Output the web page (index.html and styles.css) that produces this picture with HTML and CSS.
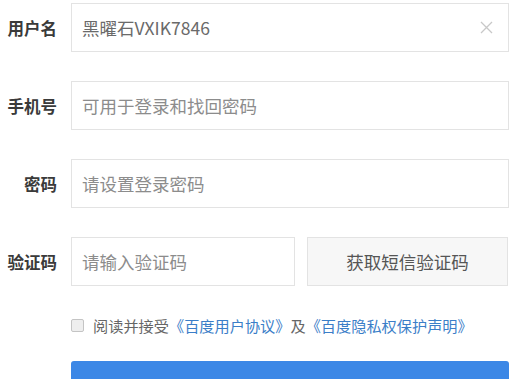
FILE: index.html
```html
<!DOCTYPE html>
<html lang="zh-CN">
<head>
  <meta charset="UTF-8" />
  <meta name="viewport" content="width=device-width, initial-scale=1.0"/>
  <title>注册百度帐号</title>
  <link rel="stylesheet" href="styles.css">
</head>
<body>
  <form class="reg-form">
    <div class="row">
      <label class="row-label" for="userName">用户名</label>
      <div class="field">
        <input id="userName" type="text" value="黑曜石VXIK7846">
        <span class="clear">
          <svg width="13" height="13" viewBox="0 0 13 13"><path d="M1 1 L12 12 M12 1 L1 12" stroke="#c8c8c8" stroke-width="1.3" fill="none"/></svg>
        </span>
      </div>
    </div>
    <div class="row">
      <label class="row-label" for="phone">手机号</label>
      <div class="field">
        <input id="phone" type="text" placeholder="可用于登录和找回密码">
      </div>
    </div>
    <div class="row">
      <label class="row-label" for="pwd">密码</label>
      <div class="field">
        <input id="pwd" type="password" placeholder="请设置登录密码">
      </div>
    </div>
    <div class="row">
      <label class="row-label" for="code">验证码</label>
      <div class="field field-code">
        <input id="code" type="text" placeholder="请输入验证码">
      </div>
      <button type="button" class="btn-sms">获取短信验证码</button>
    </div>
    <div class="agree">
      <span class="check"></span>
      阅读并接受<a href="#">《百度用户协议》</a>及<a href="#">《百度隐私权保护声明》</a>
    </div>
    <button type="submit" class="btn-submit">注册</button>
  </form>
</body>
</html>
```

FILE: styles.css
```css
body {
  font-family: "Noto Sans CJK SC", "Noto Sans", sans-serif;
  background-color: #fff;
  margin: 0;
  padding: 0;
  color: #333;
}
.reg-form {
  padding: 3px 3px 0 0;
}
.row {
  display: flex;
  align-items: center;
  height: 49px;
  margin-bottom: 29px;
}
.row-label {
  width: 57px;
  margin-right: 14px;
  text-align: right;
  font-size: 16.5px;
  font-weight: bold;
  color: #3a3a3a;
}
.field {
  flex: 1;
  height: 100%;
  position: relative;
}
.field input {
  box-sizing: border-box;
  width: 100%;
  height: 100%;
  border: 1px solid #e3e3e3;
  padding: 0 10px;
  font-family: inherit;
  font-size: 17.5px;
  color: #6a6a6a;
  outline: none;
  background: #fff;
}
.field input::placeholder {
  color: #8c8c8c;
}
.clear {
  position: absolute;
  right: 16px;
  top: 18px;
  line-height: 0;
}
.field-code {
  flex: none;
  width: 224px;
}
.btn-sms {
  box-sizing: border-box;
  width: 201px;
  height: 100%;
  margin-left: 12px;
  border: 1px solid #e3e3e3;
  background-color: #f7f7f7;
  font-family: inherit;
  font-size: 17.5px;
  color: #555;
  padding: 0;
}
.agree {
  display: flex;
  align-items: center;
  margin: 10px 0 0 71px;
  height: 20px;
  font-size: 15.2px;
  color: #666;
}
.check {
  width: 11px;
  height: 11px;
  border: 1px solid #c4c4c4;
  border-radius: 2px;
  background-color: #eee;
  margin-right: 9px;
}
.agree a {
  color: #3b7ec8;
  text-decoration: none;
}
.btn-submit {
  display: block;
  width: 438px;
  height: 64px;
  margin: 26px 0 0 71px;
  border: none;
  border-radius: 3px;
  background-color: #3b87e6;
  color: #fff;
  font-family: inherit;
  font-size: 18px;
}
```
